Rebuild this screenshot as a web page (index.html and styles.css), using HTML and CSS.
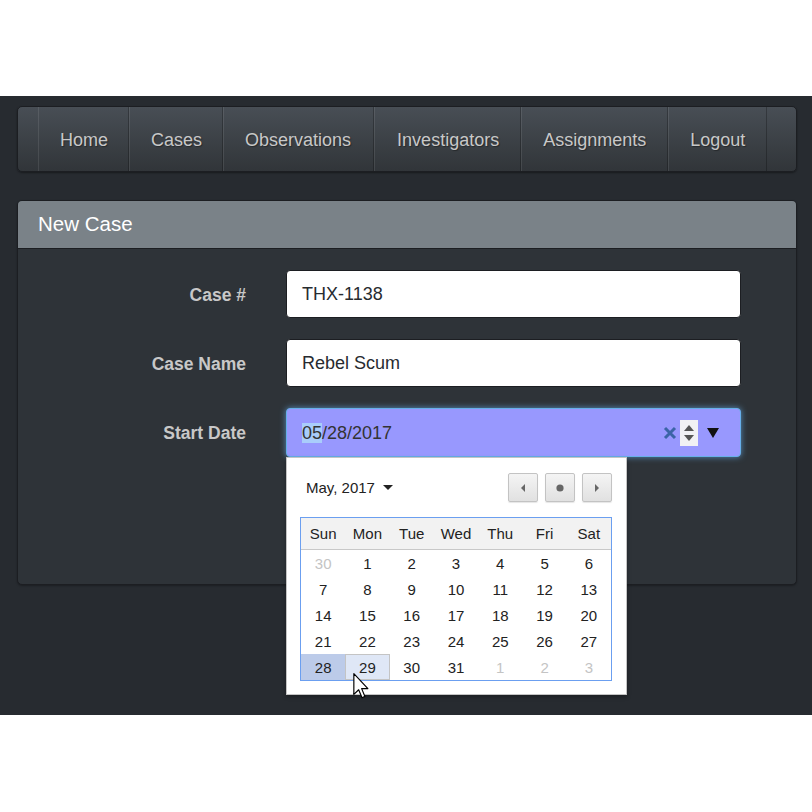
FILE: index.html
```html
<!DOCTYPE html>
<html>
<head>
<meta charset="utf-8">
<link rel="stylesheet" href="styles.css">
</head>
<body>
<div class="screen">
  <nav class="navbar">
    <a class="nav-link">Home</a>
    <a class="nav-link">Cases</a>
    <a class="nav-link">Observations</a>
    <a class="nav-link">Investigators</a>
    <a class="nav-link">Assignments</a>
    <a class="nav-link">Logout</a>
  </nav>

  <section class="panel">
    <div class="panel-heading">New Case</div>
    <div class="panel-body">
      <div class="form-row">
        <label class="form-label">Case #</label>
        <div class="input">THX-1138</div>
      </div>
      <div class="form-row">
        <label class="form-label">Case Name</label>
        <div class="input">Rebel Scum</div>
      </div>
      <div class="form-row">
        <label class="form-label">Start Date</label>
        <div class="date-wrap">
          <div class="input date-input">
            <span class="date-text"><span class="sel">05</span>/28/2017</span>
            <span class="date-controls">
              <svg class="clear-icon" width="14" height="14" viewBox="0 0 14 14"><path d="M2 2 L12 12 M12 2 L2 12" stroke="#3b64a6" stroke-width="3" stroke-linecap="butt"/></svg>
              <span class="spinner">
                <svg width="18" height="26" viewBox="0 0 18 26"><path d="M9 5 L14 11 L4 11 Z" fill="#555"/><path d="M4 15 L14 15 L9 21 Z" fill="#555"/></svg>
              </span>
              <svg class="drop-icon" width="14" height="12" viewBox="0 0 14 12"><path d="M1 1 L13 1 L7 11 Z" fill="#111"/></svg>
            </span>
          </div>

          <div class="calendar">
            <div class="cal-head">
              <span class="cal-month">May, 2017 <svg width="10" height="6" viewBox="0 0 10 6"><path d="M0 0 L10 0 L5 5 Z" fill="#222"/></svg></span>
              <div class="cal-nav">
                <span class="cal-btn"><svg width="8" height="10" viewBox="0 0 8 10"><path d="M6 1 L2 5 L6 9 Z" fill="#666"/></svg></span>
                <span class="cal-btn"><svg width="10" height="10" viewBox="0 0 10 10"><circle cx="5" cy="5" r="3.6" fill="#666"/></svg></span>
                <span class="cal-btn"><svg width="8" height="10" viewBox="0 0 8 10"><path d="M2 1 L6 5 L2 9 Z" fill="#666"/></svg></span>
              </div>
            </div>
            <table class="cal-table">
              <thead>
                <tr><th>Sun</th><th>Mon</th><th>Tue</th><th>Wed</th><th>Thu</th><th>Fri</th><th>Sat</th></tr>
              </thead>
              <tbody>
                <tr><td class="other">30</td><td>1</td><td>2</td><td>3</td><td>4</td><td>5</td><td>6</td></tr>
                <tr><td>7</td><td>8</td><td>9</td><td>10</td><td>11</td><td>12</td><td>13</td></tr>
                <tr><td>14</td><td>15</td><td>16</td><td>17</td><td>18</td><td>19</td><td>20</td></tr>
                <tr><td>21</td><td>22</td><td>23</td><td>24</td><td>25</td><td>26</td><td>27</td></tr>
                <tr><td class="selected">28</td><td class="hover">29</td><td>30</td><td>31</td><td class="other">1</td><td class="other">2</td><td class="other">3</td></tr>
              </tbody>
            </table>
            <svg class="cursor" width="16" height="26" viewBox="0 0 12 20"><path d="M0.5 0.5 L0.5 16.5 L4.2 12.9 L6.8 19 L9 18 L6.5 12 L11.3 12 Z" fill="#fff" stroke="#000" stroke-width="0.9" stroke-linejoin="round"/></svg>
          </div>
        </div>
      </div>
    </div>
  </section>
</div>
</body>
</html>
```

FILE: styles.css
```css
* { box-sizing: border-box; }

html, body {
  margin: 0;
  padding: 0;
  background: #ffffff;
  font-family: "Liberation Sans", Arial, sans-serif;
}

.screen {
  margin-top: 96px;
  height: 619px;
  background: #272b30;
  padding: 10px 15px 0 17px;
}

.navbar {
  display: flex;
  height: 66px;
  width: 780px;
  padding-left: 20px;
  border: 1px solid #1c1e22;
  border-radius: 5px;
  background: linear-gradient(#484e55, #3a3f44 60%, #313539);
  box-shadow: 0 1px 2px rgba(0,0,0,0.4);
}

.nav-link {
  display: flex;
  align-items: center;
  padding: 2px 21px 0;
  font-size: 18px;
  color: #c8c8c8;
  text-shadow: 1px 1px 1px rgba(0,0,0,0.35);
  border-left: 1px solid rgba(255,255,255,0.09);
  border-right: 1px solid rgba(0,0,0,0.25);
}

.nav-link:nth-child(1) { padding: 2px 20px 0 21px; }
.nav-link:nth-child(2) { padding: 2px 20px 0 21px; }
.nav-link:nth-child(3) { padding: 2px 22px 0 21px; }
.nav-link:nth-child(4) { padding: 2px 21px 0 22px; }

.panel {
  margin-top: 28px;
  width: 780px;
  border: 1px solid #1c1e22;
  border-radius: 5px;
  background: #2e3338;
  box-shadow: 0 1px 2px rgba(0,0,0,0.3);
}

.panel-heading {
  height: 48px;
  display: flex;
  align-items: center;
  padding: 0 20px 1px;
  background: #7a8288;
  color: #ffffff;
  font-size: 20.5px;
  border-bottom: 1px solid #1c1e22;
  border-radius: 4px 4px 0 0;
}

.panel-body {
  height: 335px;
  padding-top: 21px;
  display: flex;
  flex-direction: column;
  gap: 21px;
}

.form-row {
  display: grid;
  grid-template-columns: 228px 455px;
  column-gap: 40px;
  align-items: center;
  height: 48px;
}

.form-label {
  text-align: right;
  font-weight: bold;
  font-size: 17.5px;
  color: #c8c8c8;
  padding-top: 2px;
}

.input {
  height: 48px;
  background: #ffffff;
  border: 1px solid #1c1e22;
  border-radius: 4px;
  display: flex;
  align-items: center;
  padding: 1px 16px 0 15px;
  font-size: 18px;
  color: #272b30;
}

.date-wrap {
  position: relative;
}

.date-input {
  height: 49px;
  background: #9898fe;
  border: 1px solid #66afe9;
  box-shadow: 0 0 6px rgba(102,175,233,0.75);
  justify-content: space-between;
  color: #333;
  padding-right: 20px;
}

.sel {
  background: #a9cdfb;
}

.date-controls {
  display: flex;
  align-items: center;
  gap: 3px;
}

.spinner {
  display: flex;
  background: #f1f1f4;
  margin-right: 5px;
}

.calendar {
  position: absolute;
  top: 49px;
  left: 0;
  width: 341px;
  height: 238px;
  background: #ffffff;
  border: 1px solid #c4c4c4;
  box-shadow: 0 2px 4px rgba(0,0,0,0.3);
  padding: 15px 14px 0 13px;
  z-index: 5;
}

.cal-head {
  display: flex;
  justify-content: space-between;
  align-items: center;
  height: 29px;
  margin-bottom: 15px;
}

.cal-month {
  padding-left: 6px;
  font-size: 15px;
  color: #222;
  display: flex;
  align-items: center;
  gap: 8px;
}

.cal-nav {
  display: flex;
  gap: 7px;
}

.cal-btn {
  width: 30px;
  height: 29px;
  display: flex;
  align-items: center;
  justify-content: center;
  border: 1px solid #c3c3c3;
  border-radius: 2px;
  background: linear-gradient(#f4f4f4, #e1e1e1);
  box-shadow: 0 1px 1px rgba(0,0,0,0.1);
}

.cal-table {
  width: 312px;
  border-collapse: separate;
  border-spacing: 0;
  border: 1px solid #6b9ff0;
  font-size: 15px;
  color: #222;
  table-layout: fixed;
}

.cal-table th {
  height: 32px;
  background: #f2f2f2;
  font-weight: normal;
  border-bottom: 1px solid #c8c8c8;
  padding: 0;
}

.cal-table td {
  height: 26px;
  text-align: center;
  padding: 0;
}

.cal-table td.other {
  color: #c4c4c4;
}

.cal-table td.selected {
  background: #bccbe9;
}

.cal-table td.hover {
  background: #dfe7f6;
  outline: 1px solid #c4c4c4;
  outline-offset: -1px;
}

.cursor {
  position: absolute;
  left: 66px;
  top: 215px;
}
```
